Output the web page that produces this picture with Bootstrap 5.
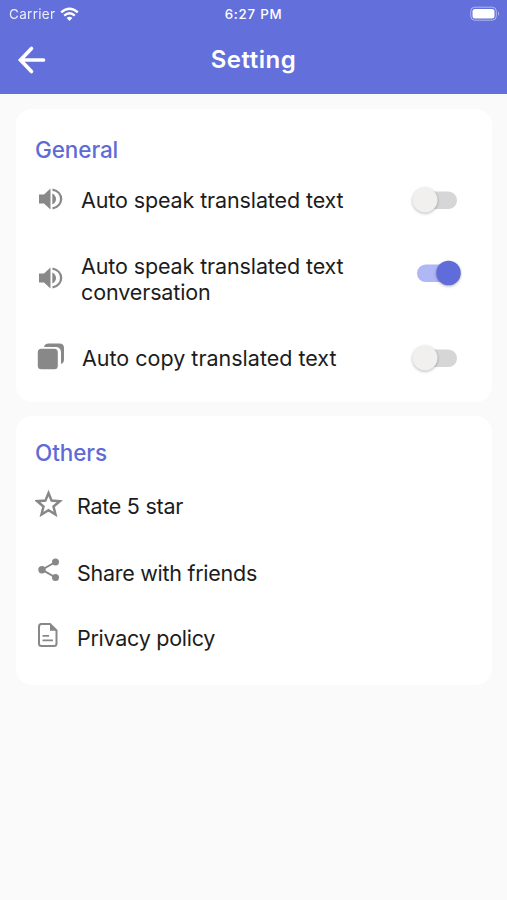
<!DOCTYPE html>
<html lang="en">
<head>
<meta charset="utf-8">
<meta name="viewport" content="width=device-width, initial-scale=1">
<title>Setting</title>
<link href="https://cdn.jsdelivr.net/npm/bootstrap@5.3.0/dist/css/bootstrap.min.css" rel="stylesheet">
<style>
body{background:#fafafa;font-family:Inter,"Liberation Sans",sans-serif;color:#1c1c1c;height:900px;overflow:hidden}
.top-area{background:#636fdb;height:93.5px;color:#fff}
.status-bar{height:27px;font-size:13.5px;line-height:28px}
.status-bar .carrier{font-size:13.5px;letter-spacing:.3px;opacity:.88;margin-left:1px}
.status-bar .clock{font-size:13.3px;font-weight:500;letter-spacing:.75px}
.title-bar{height:65px}
.title-bar h1{font-size:24px;font-weight:600;letter-spacing:.5px;line-height:30px}
.panel{margin:0 15px 0 16px;border-radius:16px;background:#fff;border:0}
.panel-general{height:293px;margin-top:15px;padding:26px 30px 0 19px}
.panel-others{height:269px;margin-top:14px;padding:22px 19px 0}
.panel h2{font-size:22.5px;font-weight:500;line-height:30px;color:#5f6bd6;margin:0;letter-spacing:-.1px}
.glyph{flex:none;display:block}
.glyph-slot{width:46px;flex:none}
.glyph-slot-sm{width:42px;flex:none}
.label{font-size:21.5px;line-height:26px;padding-top:2px;letter-spacing:-.12px}
.label-plain{letter-spacing:0;padding-left:1px}
.panel-others .label{letter-spacing:-.27px}
.toggle{width:54px;height:36px;padding-top:2px;flex:none;display:block}
.row-a{height:60px}.row-b{height:98px}
.row-b .toggle{margin-bottom:12px}
.row-c{height:66px}
.row-d{height:68px}
.row-e{height:62px}
.thumb{filter:drop-shadow(0 1.5px 1.5px rgba(0,0,0,.28))}
</style>
<script src="https://cdn.jsdelivr.net/npm/bootstrap@5.3.0/dist/js/bootstrap.bundle.min.js"></script>
</head>
<body>
<header class="top-area">
  <div class="status-bar row g-0">
    <div class="col-4 d-flex align-items-center ps-2">
      <span class="carrier">Carrier</span>
      <svg class="ms-1" width="21" height="15" viewBox="-1 0 21 15"><g fill="none" stroke="#fff" stroke-width="2.4"><path d="M1.2 5.4Q9.5-2 17.8 5.4"/><path d="M4.2 8.6Q9.5 4 14.8 8.6"/></g><path fill="#fff" d="M6.6 11Q9.500 8.600 12.400 11L9.500 14z"/></svg>
    </div>
    <div class="col-4 text-center"><span class="clock">6:27 PM</span></div>
    <div class="col-4 d-flex align-items-center justify-content-end pe-1">
      <svg width="33" height="16" viewBox="0 0 33 16"><rect x=".8" y="1.200" width="25.500" height="13" rx="4" fill="none" stroke="#fff" stroke-opacity=".5" stroke-width="1"/><rect x="2.500" y="3" width="22" height="9.500" rx="2.500" fill="#fff"/><path d="M28 5.500q2 2.200 0 4.400z" fill="#fff" fill-opacity=".5"/></svg>
    </div>
  </div>
  <nav class="title-bar row g-0 align-items-center">
    <div class="col-3"><svg class="glyph" width="50" height="40" viewBox="0 0 50 40"><path d="M43.500 20H21M31.500 8.500L20.500 20L31.500 31.500" fill="none" stroke="#fff" stroke-width="3.700" stroke-linecap="round"/></svg></div>
    <h1 class="col-6 text-center mb-0">Setting</h1>
  </nav>
</header>
<main>
  <section class="panel panel-general">
    <h2>General</h2>
    <div class="row-a d-flex align-items-center mt-1">
      <div class="glyph-slot"><svg class="glyph" width="30" height="28" viewBox="0 0 30 28"><use href="#speaker"/></svg></div>
      <div class="label flex-grow-1">Auto speak translated text</div>
      <svg class="toggle" viewBox="0 0 54 34"><use href="#off"/></svg>
    </div>
    <div class="row-b d-flex align-items-center">
      <div class="glyph-slot"><svg class="glyph" width="30" height="28" viewBox="0 0 30 28"><use href="#speaker"/></svg></div>
      <div class="label flex-grow-1">Auto speak translated text<br>conversation</div>
      <svg class="toggle" viewBox="0 0 54 34"><rect x="9" y="8.500" width="40" height="17.500" rx="8.700" fill="#b0b7f6"/><circle class="thumb" cx="40.500" cy="17" r="12.300" fill="#5f6cda"/></svg>
    </div>
    <div class="row-a d-flex align-items-center">
      <div class="glyph-slot"><svg class="glyph" width="30" height="28" viewBox="0 0 30 28"><path d="M9.500 2.500Q10.500 0.500 13.500 0.500H24.500Q29 0.500 29 5V16.500Q29 20 26 21V9.500Q26 4 20.500 4H9z" fill="#888"/><rect x="2.800" y="5.800" width="20" height="20.500" rx="3.500" fill="#888"/></svg></div>
      <div class="label label-plain flex-grow-1">Auto copy translated text</div>
      <svg class="toggle" viewBox="0 0 54 34"><use href="#off"/></svg>
    </div>
  </section>
  <section class="panel panel-others">
    <h2>Others</h2>
    <div class="row-c d-flex align-items-center mt-1">
      <div class="glyph-slot-sm"><svg class="glyph mb-1" width="28" height="28" viewBox="0 -1 28 28"><path d="M13.500 3L16.600 10.600L24.800 11.200L18.500 16.500L20.500 24.500L13.500 20.200L6.500 24.500L8.500 16.500L2.200 11.200L10.400 10.600Z" fill="none" stroke="#888" stroke-width="2.500"/></svg></div>
      <div class="label">Rate 5 star</div>
    </div>
    <div class="row-d d-flex align-items-center">
      <div class="glyph-slot-sm"><svg class="glyph mb-1" width="28" height="28" viewBox="0 0 28 28"><path d="M20.500 6L7 13.700L20.500 21.500" fill="none" stroke="#888" stroke-width="2"/><g fill="#888"><circle cx="20.500" cy="6" r="3.500"/><circle cx="7" cy="13.700" r="3.700"/><circle cx="20.500" cy="21.500" r="3.500"/></g></svg></div>
      <div class="label">Share with friends</div>
    </div>
    <div class="row-e d-flex align-items-center">
      <div class="glyph-slot-sm"><svg class="glyph mb-1" width="28" height="28" viewBox="0 0 28 28"><path d="M5.500 3H15L21.500 9.500V22.500Q21.500 25 19 25H6.500Q4 25 4 22.500V5.500Q4 3 6.500 3" fill="none" stroke="#888" stroke-width="2"/><path d="M15 2.500L22 9.700H15zM7.500 14H14v1.800H7.500zM7.500 18.500H18v1.800H7.500z" fill="#888"/></svg></div>
      <div class="label">Privacy policy</div>
    </div>
  </section>
</main>
<svg width="0" height="0" class="d-block" aria-hidden="true"><defs>
  <g id="speaker" fill="#888"><path d="M4 9.500H9L15.500 3.500V24.500L9 18.500H4z"/><path d="M17.300 8.500Q21 10.500 21 14T17.300 19.500z"/><path d="M17.500 4.600C29 7 29 21 17.500 23.400" fill="none" stroke="#888" stroke-width="2.300"/></g>
  <g id="off"><rect x="13" y="8.500" width="36" height="17.500" rx="8.700" fill="#d6d6d6"/><circle class="thumb" cx="17" cy="17" r="12.500" fill="#f1f0ef"/></g>
</defs></svg>
</body>
</html>
